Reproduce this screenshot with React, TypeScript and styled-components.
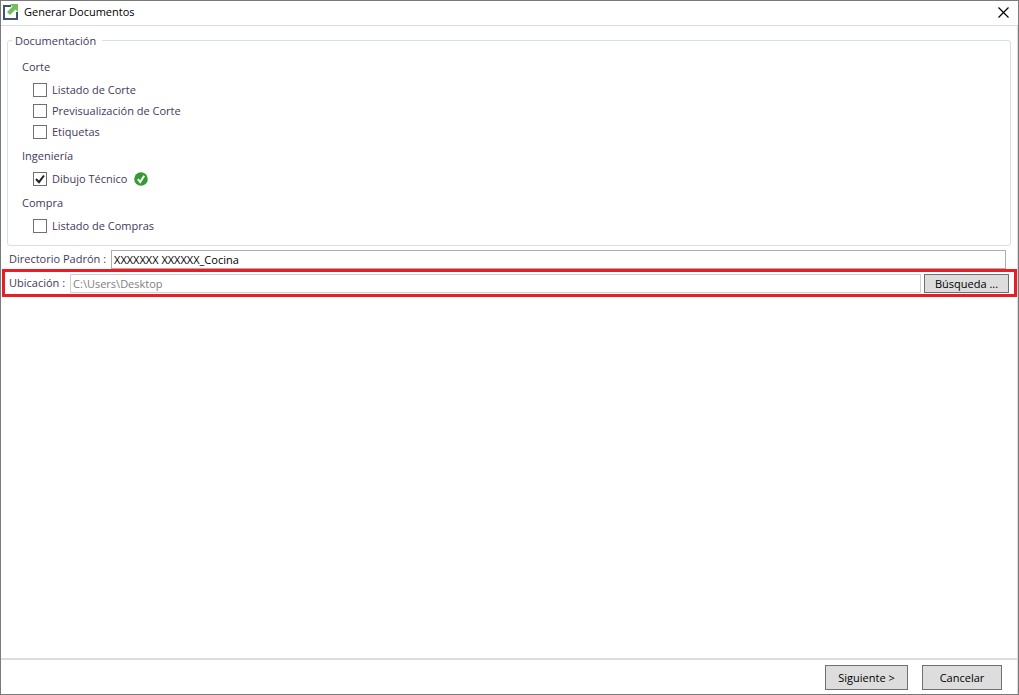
import React, { useState } from "react";
import styled, { createGlobalStyle } from "styled-components";

const GlobalStyle = createGlobalStyle`
  *, *::before, *::after { box-sizing: border-box; }
  body { margin: 0; background: #fff; }
  body, button, input { font-family: "Open Sans", "Noto Sans", sans-serif; font-size: 11px; }
`;

const Window = styled.div`
  display: flex;
  flex-direction: column;
  min-height: 100vh;
  border: 1px solid #7a7a7a;
  background: #fff;
  color: #43395a;
  line-height: 16px;
`;

const TitleBar = styled.header`
  display: flex;
  align-items: center;
  gap: 5px;
  height: 25px;
  padding: 0 9px 2px 2px;
  border-bottom: 1px solid #dcdcdc;
`;

const Title = styled.h1`
  flex: 1;
  margin: 0;
  font-size: 11px;
  font-weight: 400;
  color: #000;
`;

const CloseButton = styled.button`
  display: flex;
  padding: 0;
  border: 0;
  background: none;
`;

const Form = styled.form`
  flex: 1;
  display: flex;
  flex-direction: column;
  border-right: 1px solid #dcdcdc;
`;

const Content = styled.div`
  flex: 1;
  padding-top: 6px;
`;

const Group = styled.fieldset`
  min-width: 0;
  margin: 0 6px 4px;
  padding: 4px 14px 9px;
  border: 1px solid #d5dfe5;
  border-radius: 3px;
`;

const Legend = styled.legend`
  margin-left: -10px;
  padding: 1px 6px 0 3px;
`;

const SectionTitle = styled.h2`
  margin: 0;
  padding-top: 2px;
  font-size: 11px;
  font-weight: 400;
  line-height: 24px;
`;

const OptionLabel = styled.label`
  display: flex;
  align-items: center;
  gap: 5px;
  height: 21px;
  padding-left: 11px;
`;

const CheckBox = styled.span`
  display: grid;
  width: 14px;
  height: 14px;
  > * { grid-area: 1 / 1; }
`;

const CheckInput = styled.input`
  appearance: none;
  width: 14px;
  height: 14px;
  margin: 0;
  border: 1px solid #707070;
  background: #fff;
  & + svg { visibility: hidden; pointer-events: none; }
  &:checked + svg { visibility: visible; }
`;

const OptionName = styled.span`
  padding-right: 2px;
`;

const FieldRow = styled.div<{ $highlighted?: boolean }>`
  display: flex;
  align-items: center;
  gap: 3px;
  height: ${(p) => (p.$highlighted ? "28px" : "19px")};
  margin: ${(p) => (p.$highlighted ? "0 0 0 1px" : "0 11px 0 4px")};
  padding: ${(p) => (p.$highlighted ? "0 5px 0 4px" : "0 0 0 4px")};
  border: ${(p) => (p.$highlighted ? "3px solid #ec1c24" : "0")};
`;

const FieldLabel = styled.label`
  padding: 0 2px 1px 0;
`;

const TextInput = styled.input`
  flex: 1;
  min-width: 0;
  height: 19px;
  padding: 0 2px;
  border: 1px solid #abadb3;
  border-radius: 0;
  background: #fff;
  color: #000;
  &:disabled { border-color: #d0d0d0; color: #808080; }
`;

const Button = styled.button<{ $width: number; $compact?: boolean }>`
  width: ${(p) => p.$width}px;
  height: ${(p) => (p.$compact ? 19 : 25)}px;
  padding: 0;
  border: 1px solid #707070;
  border-radius: 0;
  background: #ddd;
  color: #000;
`;

const Footer = styled.footer`
  display: flex;
  justify-content: flex-end;
  gap: 14px;
  padding: 5px 15px 4px;
  border-top: 2px solid #dcdcdc;
`;

const AppIcon = () => (
  <svg width="16" height="16" viewBox="0 0 16 16" aria-hidden="true">
    <path d="M8 2H1v13h13V8" fill="none" stroke="#3f5573" strokeWidth="2" />
    <path d="M7 0h8v8l-2.500-2.500-5.500 5.500-3-3 5.500-5.500Z" fill="#72c05b" />
  </svg>
);

const CloseIcon = () => (
  <svg width="11" height="11" viewBox="0 0 11 11" aria-hidden="true">
    <path d="M.5 .5l10 10M10.500 .5l-10 10" stroke="#000" strokeWidth="1.200" />
  </svg>
);

const TickIcon = () => (
  <svg width="14" height="14" viewBox="0 0 14 14" aria-hidden="true">
    <path d="M3 7l3 3.200L11 3.500" fill="none" stroke="#212121" strokeWidth="2" />
  </svg>
);

const ReadyIcon = () => (
  <svg width="14" height="14" viewBox="0 0 14 14" aria-hidden="true">
    <circle cx="7" cy="7" r="6.800" fill="#349a35" />
    <path d="M3.800 7.200l2.400 2.800L10.200 3.800" fill="none" stroke="#fff" strokeWidth="2" />
  </svg>
);

const sections = [
  { title: "Corte", options: ["Listado de Corte", "Previsualización de Corte", "Etiquetas"] },
  { title: "Ingeniería", options: ["Dibujo Técnico"] },
  { title: "Compra", options: ["Listado de Compras"] },
];

export default function App() {
  const [selected, setSelected] = useState<string[]>(["Dibujo Técnico"]);
  const [directory, setDirectory] = useState("XXXXXXX XXXXXX_Cocina");

  const toggle = (name: string) =>
    setSelected((s) => (s.includes(name) ? s.filter((n) => n !== name) : [...s, name]));

  return (
    <>
      <GlobalStyle />
      <Window>
        <TitleBar>
          <AppIcon />
          <Title>Generar Documentos</Title>
          <CloseButton type="button" aria-label="Cerrar">
            <CloseIcon />
          </CloseButton>
        </TitleBar>
        <Form onSubmit={(e) => e.preventDefault()}>
          <Content>
            <Group>
              <Legend>Documentación</Legend>
              {sections.map((section) => (
                <React.Fragment key={section.title}>
                  <SectionTitle>{section.title}</SectionTitle>
                  {section.options.map((name) => (
                    <OptionLabel key={name}>
                      <CheckBox>
                        <CheckInput
                          type="checkbox"
                          checked={selected.includes(name)}
                          onChange={() => toggle(name)}
                        />
                        <TickIcon />
                      </CheckBox>
                      <OptionName>{name}</OptionName>
                      {selected.includes(name) && <ReadyIcon />}
                    </OptionLabel>
                  ))}
                </React.Fragment>
              ))}
            </Group>
            <FieldRow>
              <FieldLabel htmlFor="directory">Directorio Padrón :</FieldLabel>
              <TextInput
                id="directory"
                value={directory}
                onChange={(e) => setDirectory(e.target.value)}
              />
            </FieldRow>
            <FieldRow $highlighted>
              <FieldLabel htmlFor="location">Ubicación :</FieldLabel>
              <TextInput id="location" value="C:\Users\Desktop" disabled readOnly />
              <Button type="button" $width={85} $compact>
                Búsqueda ...
              </Button>
            </FieldRow>
          </Content>
          <Footer>
            <Button type="submit" $width={83}>
              Siguiente &gt;
            </Button>
            <Button type="button" $width={80}>
              Cancelar
            </Button>
          </Footer>
        </Form>
      </Window>
    </>
  );
}
